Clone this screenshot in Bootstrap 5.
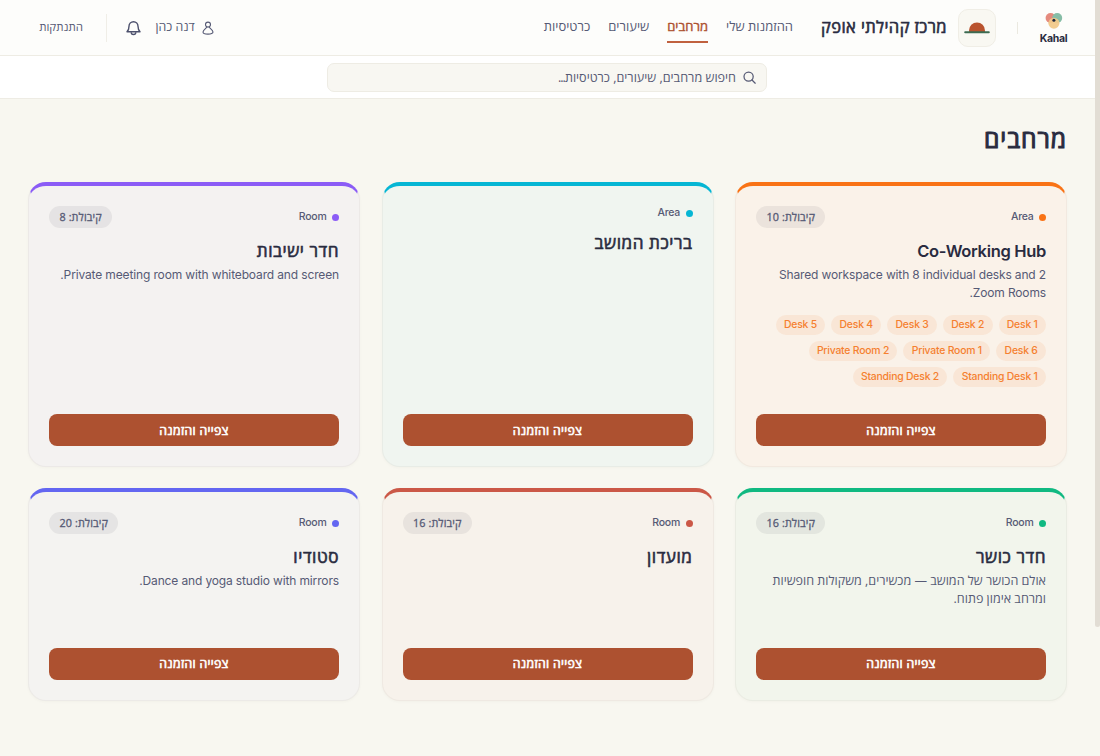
<!DOCTYPE html>
<html lang="he" dir="rtl">
<head>
<meta charset="utf-8">
<meta name="viewport" content="width=device-width, initial-scale=1">
<title>מרחבים – מרכז קהילתי אופק</title>
<link href="https://cdn.jsdelivr.net/npm/bootstrap@5.3.0/dist/css/bootstrap.min.css" rel="stylesheet">
<style>
  :root { --ink:#292b3f; --muted:#565a75; --brand:#ad5130; --line:#eeece4; --heb:"Open Sans","Noto Sans",sans-serif; --lat:"Inter","Open Sans",sans-serif; }
  html, body { height:100%; overflow:hidden; }
  body { background:#f8f7f0; color:var(--muted); font-family:var(--heb); font-size:13px; line-height:1.35; padding-right:5px; }
  .lat { font-family:var(--lat); }
  .heavy { -webkit-text-stroke:.6px currentColor; }
  .topbar { height:56px; background:#fdfdfb; border-bottom:1px solid var(--line); padding:0 28px 0 39.5px; }
  .kahal { width:27px; padding-top:2px; }
  .kahal b { font-size:10.5px; line-height:13px; letter-spacing:-.3px; color:var(--ink); margin-top:1px; }
  .rule-sm { width:1px; height:12px; background:#ebe9e0; margin-inline:22px 21px; }
  .rule-lg { width:1px; height:28px; background:#f0eee7; margin-inline:19px 23px; }
  .brand-tile { width:38px; height:38px; border-radius:10px; background:#f9f8f2; border:1px solid #f0eee6; }
  .brand-name { font-size:16.5px; letter-spacing:.4px; color:var(--ink); width:126px; margin-inline:11px 28px; white-space:nowrap; }
  .main-nav { gap:18px; }
  .main-nav .nav-link { padding:0; height:30px; line-height:26px; color:var(--muted); white-space:nowrap; }
  .main-nav .nav-link.active { color:var(--brand); border-bottom:2px solid #c0613f; -webkit-text-stroke:.4px currentColor; }
  .user-link { font-size:12.3px; gap:7px; }
  .logout { font-size:11.5px; width:43.5px; white-space:nowrap; margin-top:-2px; }
  .bell { margin-inline-start:14.5px; }
  .find-strip { height:43px; background:#fff; border-bottom:1px solid var(--line); }
  .find-box { width:440px; height:29px; border-radius:7px; background:#f8f7f2; border:1px solid #eeece4; padding:0 10px; gap:7px; font-size:12.6px; margin-inline-start:1px; }
  .dots { letter-spacing:-1px; }
  .page { padding:25px 28px 0; }
  .page h1 { font-size:24.6px; letter-spacing:1px; line-height:30px; margin:0 0 28px; color:var(--ink); -webkit-text-stroke:1px currentColor; }
  .spaces { display:grid; grid-template-columns:repeat(3,1fr); gap:21px 21.5px; grid-template-rows:285px 212.5px; }
  .space { background:var(--tint); border:1px solid rgba(100,90,60,.05); border-top:4px solid var(--tone); border-radius:18px; padding:20.4px 20px 20px; box-shadow:0 1px 3px rgba(60,50,30,.03); }
  .kind { font-size:10.5px; letter-spacing:-.24px; font-weight:500; gap:5.5px; line-height:14px; }
  .dot { width:7px; height:7px; border-radius:50%; background:var(--tone); }
  .cap { font-size:10.8px; letter-spacing:.1px; line-height:22px; padding:0 10.5px; background:rgba(40,45,55,.07); -webkit-text-stroke:.3px currentColor; white-space:nowrap; }
  .space h2 { font-size:17.1px; letter-spacing:.55px; line-height:26px; margin:10px 0 2px; color:var(--ink); }
  .space h2.lat { font-size:16.5px; letter-spacing:-.32px; font-weight:600; }
  .space p { font-size:12.55px; line-height:17.4px; margin:0; }
  .space p.lat { font-size:12px; letter-spacing:-.14px; }
  .tags { gap:6px; margin-top:13.5px; }
  .tags span { font:500 10.4px/20px var(--lat); letter-spacing:-.2px; padding:0 8.3px; color:#f5802f; background:rgba(249,115,22,.09); border-radius:10px; }
  .go { height:32px; padding:0; border:0; border-radius:8px; background:var(--brand); color:#fff; font-size:12.3px; letter-spacing:.3px; line-height:31px; }
  .go:hover { background:#984526; color:#fff; }
  .thumb { position:fixed; right:0; top:0; width:5px; height:627px; background:#e2ddd4; border-radius:0 0 3px 3px; }
</style>
</head>
<body>
<header class="topbar d-flex align-items-center">
  <a class="kahal d-flex flex-column align-items-center text-decoration-none" href="#">
    <svg width="18" height="19" viewBox="0 0 18 19"><circle cx="5.6" cy="6" r="5" fill="#e58a7d"/><circle cx="12.2" cy="6" r="5" fill="#86bda6"/><circle cx="8.9" cy="11.2" r="5.5" fill="#f1c888" fill-opacity=".93"/><circle cx="8.9" cy="8.3" r="1.5" fill="#20283f"/></svg>
    <b class="lat">Kahal</b>
  </a>
  <div class="rule-sm"></div>
  <div class="brand-tile d-flex align-items-center justify-content-center flex-shrink-0">
    <svg width="26" height="14" viewBox="0 0 26 14"><path d="M5 11V9.5a8 8 0 0 1 16 0V11z" fill="#b9532e"/><path d="M1.2 11.2h23.6" stroke="#3c6b51" stroke-width="2" stroke-linecap="round"/></svg>
  </div>
  <div class="brand-name heavy">מרכז קהילתי אופק</div>
  <nav class="main-nav d-flex">
    <a class="nav-link" href="#">ההזמנות שלי</a>
    <a class="nav-link active" href="#">מרחבים</a>
    <a class="nav-link" href="#">שיעורים</a>
    <a class="nav-link" href="#">כרטיסיות</a>
  </nav>
  <div class="flex-grow-1"></div>
  <div class="user-link d-flex align-items-center">
    <svg width="12" height="14" viewBox="0 0 12 14" fill="none" stroke="#565a75" stroke-width="1.1"><circle cx="6" cy="3.6" r="2.5"/><path d="M4.7 5.9C4.500 7.600 1.500 8.400 1 11c0 1.300 1.800 2.100 5 2.100s5-.8 5-2.100c-.5-2.600-3.500-3.400-3.700-5.100"/></svg>
    <span>דנה כהן</span>
  </div>
  <svg class="bell" width="15" height="16" viewBox="0 0 15 16" fill="none" stroke="#4c506c" stroke-width="1.4" stroke-linejoin="round"><path d="M3 6.2a4.5 4.5 0 0 1 9 0c0 3.2.8 4.3 2 5.6H1c1.200-1.300 2-2.400 2-5.600z"/><path d="M5.200 12.200a2.300 2.300 0 0 0 4.600 0"/></svg>
  <div class="rule-lg"></div>
  <a class="logout text-reset text-decoration-none" href="#">התנתקות</a>
</header>
<div class="find-strip d-flex align-items-center justify-content-center">
  <div class="find-box d-flex align-items-center">
    <svg width="13" height="13" viewBox="0 0 13 13" fill="none" stroke="#565a75" stroke-width="1.250" stroke-linecap="round"><circle cx="5.600" cy="5.600" r="4.600"/><path d="M9 9l3.200 3.200"/></svg>
    <span>חיפוש מרחבים, שיעורים, כרטיסיות<span class="dots">...</span></span>
  </div>
</div>
<main class="page">
  <h1>מרחבים</h1>
  <div class="spaces">
    <article class="space d-flex flex-column" style="--tone:#f97316;--tint:#faf2e9">
      <div class="d-flex justify-content-between align-items-center"><span class="kind lat d-flex align-items-center"><i class="dot"></i>Area</span><span class="cap rounded-pill">קיבולת: 10</span></div>
      <h2 class="lat">Co-Working Hub</h2>
      <p class="lat">Shared workspace with 8 individual desks and 2 Zoom Rooms.</p>
      <div class="tags d-flex flex-wrap"><span>Desk 1</span><span>Desk 2</span><span>Desk 3</span><span>Desk 4</span><span>Desk 5</span><span>Desk 6</span><span>Private Room 1</span><span>Private Room 2</span><span>Standing Desk 1</span><span>Standing Desk 2</span></div>
      <button class="go btn w-100 mt-auto heavy">צפייה והזמנה</button>
    </article>
    <article class="space d-flex flex-column" style="--tone:#06b6d4;--tint:#f0f5f0">
      <div class="d-flex justify-content-between align-items-center"><span class="kind lat d-flex align-items-center"><i class="dot"></i>Area</span></div>
      <h2 class="heavy">בריכת המושב</h2>
      <button class="go btn w-100 mt-auto heavy">צפייה והזמנה</button>
    </article>
    <article class="space d-flex flex-column" style="--tone:#8b5cf6;--tint:#f4f2f1">
      <div class="d-flex justify-content-between align-items-center"><span class="kind lat d-flex align-items-center"><i class="dot"></i>Room</span><span class="cap rounded-pill">קיבולת: 8</span></div>
      <h2 class="heavy">חדר ישיבות</h2>
      <p class="lat">Private meeting room with whiteboard and screen.</p>
      <button class="go btn w-100 mt-auto heavy">צפייה והזמנה</button>
    </article>
    <article class="space d-flex flex-column" style="--tone:#10b981;--tint:#f2f5ec">
      <div class="d-flex justify-content-between align-items-center"><span class="kind lat d-flex align-items-center"><i class="dot"></i>Room</span><span class="cap rounded-pill">קיבולת: 16</span></div>
      <h2 class="heavy">חדר כושר</h2>
      <p>אולם הכושר של המושב — מכשירים, משקולות חופשיות ומרחב אימון פתוח.</p>
      <button class="go btn w-100 mt-auto heavy">צפייה והזמנה</button>
    </article>
    <article class="space d-flex flex-column" style="--tone:#cb5847;--tint:#f7f2eb">
      <div class="d-flex justify-content-between align-items-center"><span class="kind lat d-flex align-items-center"><i class="dot"></i>Room</span><span class="cap rounded-pill">קיבולת: 16</span></div>
      <h2 class="heavy">מועדון</h2>
      <button class="go btn w-100 mt-auto heavy">צפייה והזמנה</button>
    </article>
    <article class="space d-flex flex-column" style="--tone:#6366f1;--tint:#f4f3f1">
      <div class="d-flex justify-content-between align-items-center"><span class="kind lat d-flex align-items-center"><i class="dot"></i>Room</span><span class="cap rounded-pill">קיבולת: 20</span></div>
      <h2 class="heavy">סטודיו</h2>
      <p class="lat">Dance and yoga studio with mirrors.</p>
      <button class="go btn w-100 mt-auto heavy">צפייה והזמנה</button>
    </article>
  </div>
</main>
<div class="thumb"></div>
<script src="https://cdn.jsdelivr.net/npm/bootstrap@5.3.0/dist/js/bootstrap.bundle.min.js"></script>
</body>
</html>
